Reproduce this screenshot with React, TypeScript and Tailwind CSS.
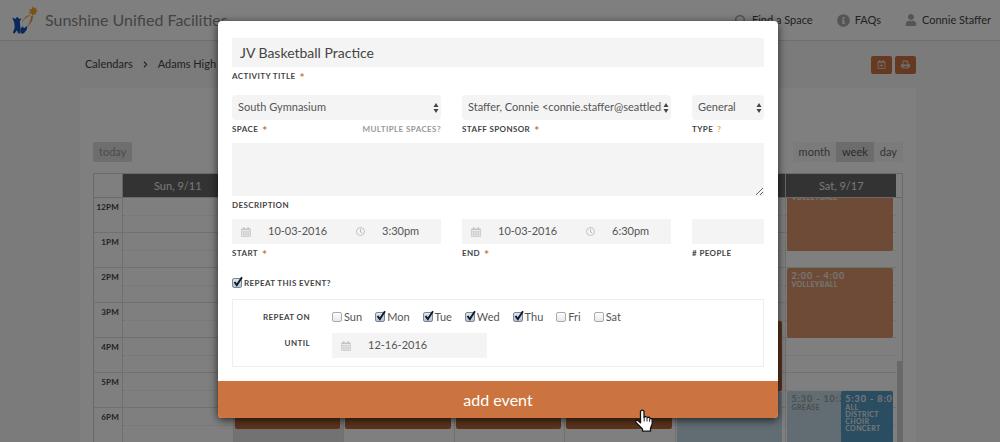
import { useState } from 'react';
import { Search } from 'lucide-react';
import { FaChevronRight, FaInfoCircle, FaRegCalendarPlus, FaRegClock, FaUser } from 'react-icons/fa';

const HOUR = 35;

const hours = ['12PM', '1PM', '2PM', '3PM', '4PM', '5PM', '6PM'];

type CalEvent = {
  time: string;
  title: string;
  start: number;
  end: number;
  color: string;
  side?: 'right';
};

const practice = { time: '2:30 - 6:30', title: 'Practice', start: 2.5, end: 6.6, color: 'bg-[#b8683a] text-white' };

const days: { label: string; today?: boolean; events: CalEvent[] }[] = [
  { label: 'Sun, 9/11', events: [] },
  { label: 'Mon, 9/12', today: true, events: [practice] },
  { label: 'Tue, 9/13', events: [practice] },
  { label: 'Wed, 9/14', events: [practice] },
  { label: 'Thu, 9/15', events: [practice] },
  {
    label: 'Fri, 9/16',
    events: [
      { time: '3:30 - 5:30', title: 'Football', start: 3.5, end: 5.5, color: 'bg-[#b0653c] text-white' },
      { time: '5:30 - 10:30', title: 'Grease', start: 5.5, end: 10.5, color: 'bg-[#c2dbe4] text-[#999]' },
    ],
  },
  {
    label: 'Sat, 9/17',
    events: [
      { time: '11:30 - 1:30', title: 'Volleyball', start: -0.5, end: 1.5, color: 'bg-[#dc966c] text-[#eee]' },
      { time: '2:00 - 4:00', title: 'Volleyball', start: 2, end: 4, color: 'bg-[#dc966c] text-[#eee]' },
      { time: '5:30 - 10:30', title: 'Grease', start: 5.5, end: 10.5, color: 'bg-[#c2dbe4] text-[#999]' },
      { time: '5:30 - 8:00', title: 'All District Choir Concert', start: 5.5, end: 8, color: 'bg-[#549ac4] text-[#eee]', side: 'right' },
    ],
  },
];

function Logo() {
  return (
    <svg viewBox="0 0 26 28" className="h-7 w-[26px]" aria-hidden="true">
      <path d="M21 0l1.200 2.400 2.600-.9-.9 2.500 2.100 1.300-2.300 1 .6 2.600-2.400-1-1.600 2-.9-2.400-2.600.2 1.500-2.100-1.500-2.200 2.700-.2z" fill="#f5a623" />
      <path d="M18.500 8.500C14.500 9.500 11.500 12 9.500 17c2.500-3.500 5-6 8-7.200zM21 9.500c.3 4-1.500 7.500-5.500 11.500 2-4 3.200-7.500 3.500-11z" fill="#f0a04a" />
      <path d="M.3 11.500l3.300 1.600c.2-2.400 3-2.500 3.300-.2l2.300-.6-1.400 3.500.9 9-.9 2.700-1.800-.2-1-3-2.500 3.200-1.700-.5 1.900-5.500-.4-4.800z" fill="#1552b0" />
      <path d="M8.500 27.500l.2-5 2.100-2.200 1.200 2 3.500-2.600-.9 4.300-2.900 3.500z" fill="#1552b0" />
    </svg>
  );
}

function CalendarIcon() {
  return (
    <svg viewBox="0 0 10 10" className="h-[10px] w-[10px] shrink-0 text-[#c4c4c4]" aria-hidden="true">
      <path d="M.5 2h9v7.500h-9zM.5 4.200h9M.5 6h9M.5 7.800h9M2.800 4.200v5.300M5 4.200v5.300M7.200 4.200v5.300" fill="none" stroke="currentColor" strokeWidth=".7" />
      <path d="M2 .2h1.400v2.600H2zM6.600.2H8v2.600H6.600zM.5 1.800h9V3h-9z" fill="currentColor" />
    </svg>
  );
}

function PrintIcon() {
  return (
    <svg viewBox="0 0 16 16" className="h-[9px] w-[9px]" fill="currentColor" aria-hidden="true">
      <path fillRule="evenodd" d="M3 1h8l2 2v4h1a2 2 0 0 1 2 2v4h-3v2H3v-2H0V9a2 2 0 0 1 2-2h1zm1.500 1.500V8h7V4.500h-2v-2zm0 8.500v2.500h7V11z" />
    </svg>
  );
}

function Caption({ children, required, htmlFor }: { children: string; required?: boolean; htmlFor: string }) {
  return (
    <label htmlFor={htmlFor} className="flex h-4 gap-1 text-[8px] leading-[18px] font-bold tracking-wider whitespace-nowrap text-[#444] uppercase">
      {children}
      {required && <span className="text-xs leading-[22px] text-[#cc7440]">*</span>}
    </label>
  );
}

function Select({ id, options }: { id: string; options: string[] }) {
  return (
    <div className="relative">
      <select id={id} className="block h-[25px] w-full appearance-none rounded-sm border-r-[9px] border-[#f4f4f4] bg-[#f4f4f4] pl-[6px] text-[11px] text-[#555]">
        {options.map((o) => (
          <option key={o}>{o}</option>
        ))}
      </select>
      <svg viewBox="0 0 6 10" className="pointer-events-none absolute top-2 right-[2px] h-[10px] w-[6px]" fill="#444" aria-hidden="true">
        <path d="M3 0l2.500 4h-5zM3 10l2.500-4h-5z" />
      </svg>
    </div>
  );
}

function DateTime({ id, date, time }: { id: string; date: string; time: string }) {
  return (
    <div className="flex h-[25px] items-center bg-[#f4f4f4] pl-[9px] text-[11px] text-[#555]">
      <CalendarIcon />
      <input id={id} defaultValue={date} className="ml-[17px] w-0 flex-1" />
      <FaRegClock className="h-[9px] w-[9px] shrink-0 text-[#bbb]" />
      <input aria-label={`${id} time`} defaultValue={time} className="ml-[17px] w-[59px]" />
    </div>
  );
}

function Check({ label, checked, caption }: { label: string; checked?: boolean; caption?: boolean }) {
  const [on, setOn] = useState(!!checked);

  return (
    <label className={caption ? 'flex items-center gap-[2px] text-[8px] font-bold tracking-wider text-[#444] uppercase' : 'flex items-center gap-[2px] text-[11px] text-[#555]'}>
      <span className="relative h-[10px] w-[10px]">
        <input
          type="checkbox"
          checked={on}
          onChange={() => setOn(!on)}
          className="block h-[10px] w-[10px] appearance-none rounded-xs border border-[#aaa] bg-linear-to-b from-white to-[#e8e8e8] checked:border-[#7d8794] checked:from-[#dde5ee] checked:to-[#b4c3d4]"
        />
        {on && (
          <svg viewBox="0 0 12 12" className="pointer-events-none absolute -top-[2px] left-0 h-3 w-3" aria-hidden="true">
            <path d="M2.500 6l2.300 3L10 1.200" fill="none" stroke="#10192b" strokeWidth="1.900" />
          </svg>
        )}
      </span>
      {label}
    </label>
  );
}

function Header() {
  return (
    <header className="flex h-[41px] items-center border-b border-[#ddd] bg-white pr-[9px] pl-3">
      <Logo />
      <span className="ml-[7px] text-base text-[#888]">Sunshine Unified Facilities</span>
      <nav className="ml-auto flex gap-6 text-[11px] text-[#444]">
        <a href="#find" className="flex items-center gap-[5px]">
          <Search className="h-[13px] w-[13px] text-[#aaa]" strokeWidth={3} />
          Find a Space
        </a>
        <a href="#faqs" className="flex items-center gap-[5px]">
          <FaInfoCircle className="h-[13px] w-[13px] text-[#aaa]" />
          FAQs
        </a>
        <a href="#account" className="flex items-center gap-[5px]">
          <FaUser className="h-3 w-3 text-[#aaa]" />
          Connie Staffer
        </a>
      </nav>
    </header>
  );
}

function EventCard({ event }: { event: CalEvent }) {
  return (
    <div
      className={`absolute right-[3px] overflow-hidden rounded-xs px-1 pt-[3px] font-bold uppercase ${event.side ? 'left-1/2' : 'left-[1px]'} ${event.color}`}
      style={{ top: event.start * HOUR, height: (event.end - event.start) * HOUR }}
    >
      <p className="text-[9px] leading-[10px] tracking-widest whitespace-nowrap">{event.time}</p>
      <p className="text-[7px] leading-[7px] tracking-wider">{event.title}</p>
    </div>
  );
}

function Calendar() {
  return (
    <div className="border border-[#d4d4d4]">
      <div className="flex h-6 border-b border-[#d4d4d4] pr-[6px]">
        <div className="w-7 shrink-0" />
        {days.map((d) => (
          <div key={d.label} className="flex-1 border-l border-[#ccc] bg-[#666] text-center text-[11px] leading-6 text-[#eee]">
            {d.label}
          </div>
        ))}
      </div>
      <div className="flex overflow-hidden">
        <div className="w-7 shrink-0">
          {hours.map((h) => (
            <div key={h} className="h-[35px] border-b border-[#e0e0e0] pt-[3px] pr-[3px] text-right text-[8px] leading-3 font-bold tracking-wide text-[#444]">
              {h}
            </div>
          ))}
        </div>
        {days.map((d) => (
          <div key={d.label} className={`relative flex-1 border-l border-[#e0e0e0] ${d.today ? 'bg-[#e4e4e4]' : ''}`}>
            {hours.map((h) => (
              <div key={h} className="h-[35px] border-b border-[#e0e0e0]">
                <div className="h-[18px] border-b border-dotted border-[#e6e6e6]" />
              </div>
            ))}
            {d.events.map((e) => (
              <EventCard key={e.time + e.title} event={e} />
            ))}
          </div>
        ))}
        <div className="w-[6px] shrink-0 pt-[163px] pl-[1px]">
          <div className="h-full bg-[#d0d0d0]" />
        </div>
      </div>
    </div>
  );
}

function EventForm() {
  return (
    <form className="mx-auto w-full max-w-[560px] overflow-hidden rounded-sm bg-white shadow-[0_2px_8px_rgba(0,0,0,0.7)]" onSubmit={(e) => e.preventDefault()}>
      <div className="px-[14px] pt-[17px] pb-[14px]">
        <input id="title" defaultValue="JV Basketball Practice" className="block h-[29px] w-full bg-[#f4f4f4] px-2 text-sm text-[#444]" />
        <Caption htmlFor="title" required>Activity Title</Caption>

        <div className="mt-3 grid grid-cols-[1fr_1fr_72px] gap-[21px]">
          <div className="min-w-0">
            <Select id="space" options={['South Gymnasium', 'North Gymnasium']} />
            <div className="flex justify-between">
              <Caption htmlFor="space" required>Space</Caption>
              <a href="#spaces" className="text-[8px] leading-[18px] font-bold tracking-wider text-[#999] uppercase">Multiple Spaces?</a>
            </div>
          </div>
          <div className="min-w-0">
            <Select id="sponsor" options={['Staffer, Connie <connie.staffer@seattledistrict.org>']} />
            <Caption htmlFor="sponsor" required>Staff Sponsor</Caption>
          </div>
          <div className="min-w-0">
            <Select id="type" options={['General', 'Athletics']} />
            <div className="flex gap-1">
              <Caption htmlFor="type">Type</Caption>
              <a href="#type-help" className="text-[8px] leading-[18px] font-bold text-[#e8a33d]">?</a>
            </div>
          </div>
        </div>

        <textarea id="description" className="mt-[5px] block h-[53px] w-full bg-[#f4f4f4] p-2 text-[11px]" />
        <Caption htmlFor="description">Description</Caption>

        <div className="mt-[7px] grid grid-cols-[1fr_1fr_72px] gap-[21px]">
          <div>
            <DateTime id="start" date="10-03-2016" time="3:30pm" />
            <Caption htmlFor="start" required>Start</Caption>
          </div>
          <div>
            <DateTime id="end" date="10-03-2016" time="6:30pm" />
            <Caption htmlFor="end" required>End</Caption>
          </div>
          <div>
            <input id="people" className="block h-[25px] w-full bg-[#f4f4f4] px-2 text-[11px]" />
            <Caption htmlFor="people"># People</Caption>
          </div>
        </div>

        <div className="mt-4 flex h-[14px] items-center">
          <Check label="Repeat this event?" checked caption />
        </div>

        <div className="mt-[9px] grid grid-cols-[77px_1fr] gap-x-[22px] gap-y-[6px] border border-[#eee] pt-[7px] pb-2">
          <span className="text-right text-[8px] leading-5 font-bold tracking-wider text-[#444] uppercase">Repeat on</span>
          <div className="flex h-5 items-center gap-[13px]">
            <Check label="Sun" />
            <Check label="Mon" checked />
            <Check label="Tue" checked />
            <Check label="Wed" checked />
            <Check label="Thu" checked />
            <Check label="Fri" />
            <Check label="Sat" />
          </div>
          <label htmlFor="until" className="text-right text-[8px] leading-5 font-bold tracking-wider text-[#444] uppercase">Until</label>
          <div className="flex h-[25px] w-[155px] items-center bg-[#f4f4f4] pl-[9px] text-[11px] text-[#555]">
            <CalendarIcon />
            <input id="until" defaultValue="12-16-2016" className="ml-[17px] w-0 flex-1" />
          </div>
        </div>
      </div>
      <button type="submit" className="block h-[37px] w-full cursor-pointer bg-[#cc7440] text-base text-white">add event</button>
    </form>
  );
}

export default function App() {
  return (
    <div className="relative h-screen overflow-hidden bg-[#f6f6f6] font-['Lato',sans-serif]">
      <Header />
      <main className="mx-auto max-w-[840px] pr-1">
        <div className="flex h-[47px] items-center justify-between pl-[5px]">
          <div className="flex items-center gap-[9px] text-[11px] text-[#444]">
            <a href="#calendars">Calendars</a>
            <FaChevronRight className="h-[7px] w-[7px]" />
            <span>Adams High</span>
          </div>
          <div className="flex gap-[3px]">
            <button aria-label="Add event" className="flex h-[18px] w-[21px] items-center justify-center rounded-xs bg-[#cc7440] text-[#ddd]">
              <FaRegCalendarPlus className="h-[9px] w-[9px]" />
            </button>
            <button aria-label="Print" className="flex h-[18px] w-[21px] items-center justify-center rounded-xs bg-[#cc7440] text-[#ddd]">
              <PrintIcon />
            </button>
          </div>
        </div>
        <section className="bg-white px-[13px] pt-[54px]">
          <div className="flex h-5 items-center justify-between text-[11px] text-[#999]">
            <button className="h-5 rounded-xs bg-[#dcdcdc] px-[6px]">today</button>
            <div className="flex bg-[#f6f6f6] text-[#666]">
              <button className="h-5 px-[6px]">month</button>
              <button className="h-5 bg-[#d8d8d8] px-[6px] text-[#555]">week</button>
              <button className="h-5 px-[6px]">day</button>
            </div>
          </div>
          <div className="mt-[11px]">
            <Calendar />
          </div>
        </section>
      </main>

      <div className="absolute inset-0 bg-black/50 pt-[21px] pr-1">
        <EventForm />
        {/* pointer over the submit button */}
        <svg viewBox="0 0 20 24" className="absolute top-[409px] left-[634px] h-6 w-5" aria-hidden="true">
          <path d="M6.500 2.500a1.800 1.800 0 0 1 3.500 0v6l1.500-1 2 1 1.600-.3 1.300 1.300 1.800.4v5l-1.700 4.300v3H8.500v-2.300L2 13.500c-.9-1.800.8-3 2.200-1.700l2.300 2z" fill="#fff" stroke="#111" strokeWidth="1.300" strokeLinejoin="round" />
          <path d="M10.200 8.500v4M13 9v3.500M15.600 9.800v3" stroke="#111" strokeWidth=".9" />
        </svg>
      </div>
    </div>
  );
}
